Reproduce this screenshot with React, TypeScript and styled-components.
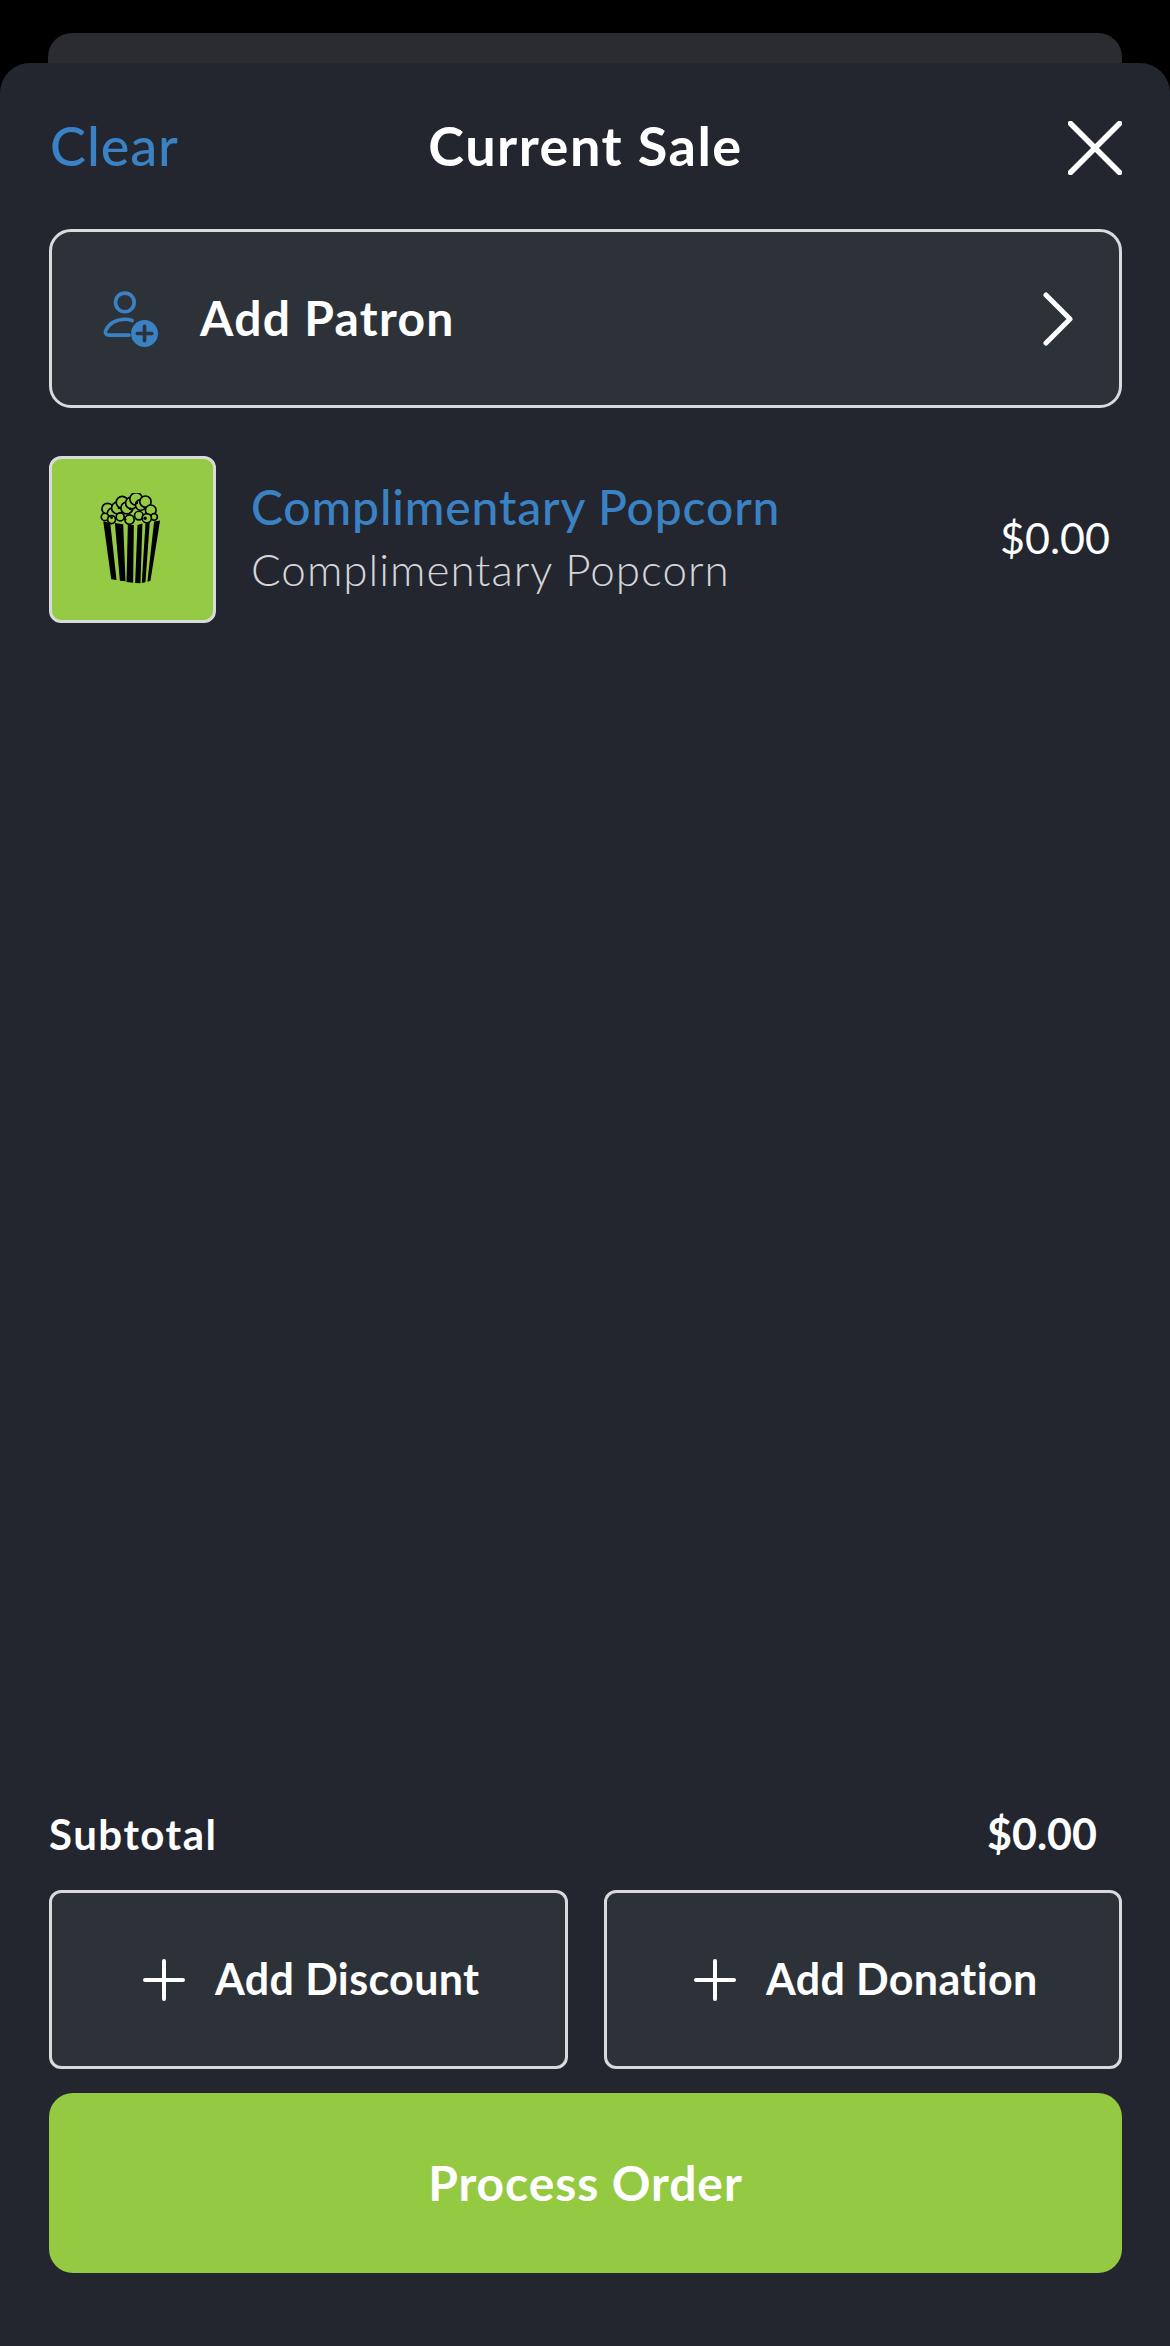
import styled, { createGlobalStyle } from "styled-components"

const GlobalStyle = createGlobalStyle`
  html, body {
    margin: 0;
    background: #000;
  }
  * {
    box-sizing: border-box;
  }
`

const kernels: [number, number, number][] = [
  [232, 208, 17], [248, 222, 17], [262, 205, 18], [276, 188, 18], [290, 205, 18],
  [304, 190, 18], [318, 178, 19], [332, 196, 16], [346, 186, 17], [362, 212, 16],
  [372, 232, 10], [224, 232, 11], [244, 240, 12], [270, 232, 12], [298, 240, 14],
  [326, 228, 13], [350, 236, 14],
]

const PopcornIcon = () => (
  <svg width="62" height="93" viewBox="210 160 185 280">
    <g fill="#000">
      <polygon points="219,245 240,250 259,422 243,420" />
      <polygon points="254,250 279,254 286,426 269,424" />
      <polygon points="293,256 311,256 309,430 289,428" />
      <polygon points="322,256 337,252 331,432 315,431" />
      <polygon points="346,252 359,248 346,429 335,431" />
      <polygon points="372,246 390,243 361,424 352,427" />
    </g>
    <g fill="#95ca44" stroke="#000" strokeWidth="5">
      {kernels.map(([cx, cy, r]) => (
        <circle key={`${cx}-${cy}`} cx={cx} cy={cy} r={r} />
      ))}
    </g>
    <g fill="#000">
      <circle cx="266" cy="205" r="4" />
      <circle cx="300" cy="208" r="4" />
      <circle cx="345" cy="236" r="5" />
      <circle cx="320" cy="190" r="4" />
      <circle cx="244" cy="234" r="4" />
      <circle cx="286" cy="240" r="3" />
    </g>
  </svg>
)

const PatronIcon = () => (
  <svg width="58" height="56" viewBox="0 0 56 54" fill="none">
    <circle cx="24" cy="11" r="9" stroke="#3a82c4" strokeWidth="3.5" />
    <path
      d="M31 28.5c-2-.8-4.4-1.3-7-1.3-9 0-16 4.8-18.5 11-.9 2.4.4 4.4 3 4.4H28"
      stroke="#3a82c4"
      strokeWidth="3.5"
      strokeLinecap="round"
    />
    <circle cx="43" cy="41" r="13" fill="#3a82c4" />
    <path d="M43 34v14M36 41h14" stroke="#2d3238" strokeWidth="3.5" strokeLinecap="round" />
  </svg>
)

const CloseIcon = () => (
  <svg width="54" height="54" viewBox="0 0 54 54" fill="none">
    <path d="M2.5 2.5l49 49M51.5 2.5l-49 49" stroke="#fff" strokeWidth="5.5" strokeLinecap="round" />
  </svg>
)

const ChevronIcon = () => (
  <svg width="32" height="54" viewBox="0 0 32 54" fill="none">
    <path d="M3 3l24 24L3 51" stroke="#fff" strokeWidth="5" strokeLinecap="round" strokeLinejoin="round" />
  </svg>
)

const PlusIcon = () => (
  <svg width="42" height="42" viewBox="0 0 42 42" fill="none">
    <path d="M21 2v38M2 21h38" stroke="#fff" strokeWidth="4" strokeLinecap="round" />
  </svg>
)

const App = () => {
  return (
    <Page>
      <GlobalStyle />
      <BackCard />
      <Sheet>
        <Header>
          <ClearLink>Clear</ClearLink>
          <Title>Current Sale</Title>
          <CloseButton>
            <CloseIcon />
          </CloseButton>
        </Header>

        <PatronRow>
          <PatronLeft>
            <PatronIcon />
            <PatronLabel>Add Patron</PatronLabel>
          </PatronLeft>
          <ChevronIcon />
        </PatronRow>

        <Item>
          <Thumb>
            <PopcornIcon />
          </Thumb>
          <ItemText>
            <ItemName>Complimentary Popcorn</ItemName>
            <ItemDesc>Complimentary Popcorn</ItemDesc>
          </ItemText>
          <ItemPrice>$0.00</ItemPrice>
        </Item>

        <Footer>
          <SubtotalRow>
            <SubtotalLabel>Subtotal</SubtotalLabel>
            <SubtotalValue>$0.00</SubtotalValue>
          </SubtotalRow>
          <ActionRow>
            <ActionButton>
              <PlusIcon />
              <ActionLabel>Add Discount</ActionLabel>
            </ActionButton>
            <ActionButton>
              <PlusIcon />
              <ActionLabel>Add Donation</ActionLabel>
            </ActionButton>
          </ActionRow>
          <ProcessButton>Process Order</ProcessButton>
        </Footer>
      </Sheet>
    </Page>
  )
}

export default App

const Page = styled.div`
  display: flex;
  flex-direction: column;
  width: 1170px;
  height: 2346px;
  padding-top: 33px;
  background: #000;
  font-family: "Lato", "Noto Sans", sans-serif;
  overflow: hidden;
`

const BackCard = styled.div`
  flex: none;
  height: 30px;
  margin: 0 48px;
  background: #2b2c2f;
  border-radius: 24px 24px 0 0;
`

const Sheet = styled.div`
  flex: 1;
  display: flex;
  flex-direction: column;
  padding: 0 48px 73px 49px;
  background: #23262e;
  border-radius: 30px 30px 0 0;
`

const Header = styled.div`
  position: relative;
  display: flex;
  align-items: center;
  justify-content: space-between;
  height: 54px;
  margin-top: 58px;
`

const ClearLink = styled.div`
  padding: 0 0 5px 1px;
  font-size: 54px;
  font-weight: 500;
  letter-spacing: 0.9px;
  color: #3a82c4;
`

const Title = styled.div`
  position: absolute;
  left: 0;
  right: 0;
  padding-bottom: 5px;
  text-align: center;
  font-size: 54px;
  font-weight: 700;
  letter-spacing: 1.5px;
  color: #fff;
`

const CloseButton = styled.div`
  display: flex;
`

const PatronRow = styled.div`
  display: flex;
  align-items: center;
  justify-content: space-between;
  height: 179px;
  margin-top: 54px;
  padding: 0 44px 0 48px;
  background: #2d3238;
  border: 3px solid #d8dadc;
  border-radius: 22px;
`

const PatronLeft = styled.div`
  display: flex;
  align-items: center;
  gap: 42px;
`

const PatronLabel = styled.div`
  padding-bottom: 2px;
  font-size: 48px;
  font-weight: 700;
  letter-spacing: 1.3px;
  color: #fff;
`

const Item = styled.div`
  display: flex;
  align-items: center;
  margin-top: 48px;
  padding-right: 12px;
`

const Thumb = styled.div`
  flex: none;
  display: flex;
  align-items: center;
  justify-content: center;
  width: 167px;
  height: 167px;
  padding-right: 3px;
  background: #95ca44;
  border: 3px solid #d8dadc;
  border-radius: 12px;
`

const ItemText = styled.div`
  flex: 1;
  display: flex;
  flex-direction: column;
  gap: 8px;
  margin-left: 35px;
  padding-bottom: 6px;
`

const ItemName = styled.div`
  font-size: 48px;
  font-weight: 500;
  letter-spacing: 0.85px;
  color: #3a82c4;
`

const ItemDesc = styled.div`
  font-size: 44px;
  font-weight: 300;
  letter-spacing: 1px;
  color: #d4d5d8;
`

const ItemPrice = styled.div`
  padding-bottom: 4px;
  font-size: 43px;
  font-weight: 400;
  color: #fff;
`

const Footer = styled.div`
  margin-top: auto;
  display: flex;
  flex-direction: column;
`

const SubtotalRow = styled.div`
  display: flex;
  align-items: center;
  justify-content: space-between;
  padding-right: 25px;
`

const SubtotalLabel = styled.div`
  font-size: 42px;
  font-weight: 700;
  letter-spacing: 1.5px;
  color: #fff;
`

const SubtotalValue = styled.div`
  font-size: 43px;
  font-weight: 700;
  color: #fff;
`

const ActionRow = styled.div`
  display: grid;
  grid-template-columns: 1fr 1fr;
  gap: 36px;
  margin-top: 31px;
`

const ActionButton = styled.div`
  display: flex;
  align-items: center;
  justify-content: center;
  gap: 30px;
  height: 179px;
  padding-left: 6px;
  background: #2d3238;
  border: 3px solid #d8dadc;
  border-radius: 12px;
`

const ActionLabel = styled.span`
  padding-bottom: 2px;
  font-size: 43px;
  font-weight: 700;
  letter-spacing: 0.35px;
  color: #fff;
`

const ProcessButton = styled.div`
  display: flex;
  align-items: center;
  justify-content: center;
  height: 180px;
  margin-top: 24px;
  padding-bottom: 2px;
  font-size: 48px;
  font-weight: 700;
  letter-spacing: 0.9px;
  color: #fff;
  background: #94c942;
  border-radius: 24px;
`
